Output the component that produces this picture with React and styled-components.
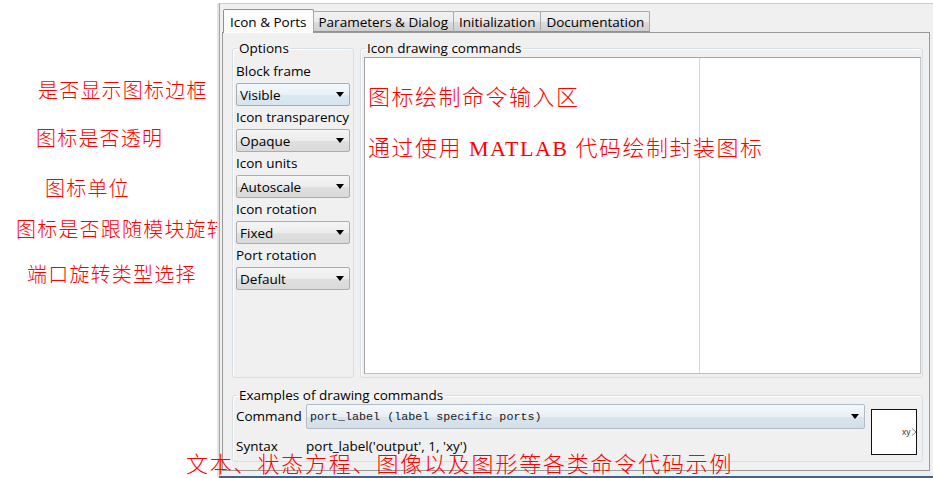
import React from 'react'
import styled, { createGlobalStyle } from 'styled-components'

const uiFont = `"Open Sans", "Noto Sans", sans-serif`
const noteFont = `"Liberation Serif", "Noto Sans CJK SC", serif`

const GlobalStyle = createGlobalStyle`
  html, body {
    margin: 0;
    padding: 0;
    background: #ffffff;
  }

  body {
    overflow: hidden;
  }
`

const Page = styled.div`
  position: relative;
  width: 933px;
  height: 478px;
  display: flex;
  flex-direction: row;
  overflow: hidden;
  font-family: ${uiFont};
`

const Notes = styled.div`
  width: 219px;
  flex: none;
  display: flex;
  flex-direction: column;
`

const Note = styled.div`
  margin-top: ${(p) => p.$top}px;
  padding-left: ${(p) => p.$indent}px;
  font-family: ${noteFont};
  font-size: 20px;
  font-weight: 300;
  line-height: 24px;
  letter-spacing: 1.2px;
  color: #ff0000;
  white-space: nowrap;
`

const Caption = styled.div`
  position: absolute;
  left: 186px;
  top: 453px;
  font-family: ${noteFont};
  font-size: 22px;
  font-weight: 300;
  line-height: 24px;
  letter-spacing: 1.8px;
  color: #ff0000;
  white-space: nowrap;
`

const Window = styled.div`
  flex: 1;
  margin-top: 3px;
  height: 475px;
  box-sizing: border-box;
  display: flex;
  flex-direction: column;
  background: #f0f0f0;
  border-top: 1px solid #cdcdc2;
  border-left: 1px solid #a4a4a4;
  border-bottom: 2px solid #3b648c;
  box-shadow: -2px 0 0 #e4e4e4;
`

const TabBar = styled.div`
  display: flex;
  align-items: flex-end;
  padding: 5px 0 0 3px;
  margin-bottom: -1px;
  position: relative;
  z-index: 1;
`

const Tab = styled.div`
  box-sizing: border-box;
  height: ${(p) => (p.$active ? 24 : 21)}px;
  padding: 0 ${(p) => (p.$active ? 6 : 5)}px;
  margin-left: ${(p) => (p.$active ? 0 : -1)}px;
  display: flex;
  align-items: center;
  font-size: 13.5px;
  color: #000;
  border: 1px solid ${(p) => (p.$active ? '#8e9196' : '#a9a9a9')};
  border-bottom: ${(p) => (p.$active ? 'none' : '1px solid #8e9196')};
  border-radius: 2px 2px 0 0;
  background: ${(p) =>
    p.$active
      ? '#fcfcfc'
      : 'linear-gradient(#f2f2f2, #ebebeb 50%, #dddddd 51%, #cfcfcf)'};
  margin-bottom: ${(p) => (p.$active ? 0 : 1)}px;
`

const Pane = styled.div`
  flex: 1;
  margin: 0 3px 5px 2px;
  box-sizing: border-box;
  display: flex;
  flex-direction: column;
  gap: 8px;
  padding: 6px 6px 8px 9px;
  border: 1px solid #9a9a9a;
  background: #f0f0f0;
`

const TopRow = styled.div`
  flex: 1;
  display: grid;
  grid-template-columns: 122px 1fr;
  column-gap: 6px;
  min-height: 0;
`

const Group = styled.fieldset`
  margin: 0;
  min-width: 0;
  display: flex;
  flex-direction: column;
  padding: ${(p) => p.$pad || '0 3px 3px 3px'};
  border: 1px solid #d5dfe5;
  border-radius: 3px;
  box-shadow: inset 1px 1px 0 #ffffff;
`

const Legend = styled.legend`
  padding: 0 2px;
  margin-left: 1px;
  font-size: 13.5px;
  line-height: 18px;
  color: #000;
`

const OptionList = styled.div`
  display: flex;
  flex-direction: column;
  padding-top: 3px;
`

const Label = styled.div`
  height: 23px;
  line-height: 23px;
  font-size: 13.5px;
  color: #000;
  white-space: nowrap;
`

const Select = styled.div`
  height: ${(p) => (p.$tall ? 25 : 23)}px;
  box-sizing: border-box;
  display: flex;
  align-items: center;
  justify-content: space-between;
  padding: 0 5px 0 3px;
  border: 1px solid ${(p) => (p.$tone === 'blue' ? '#b0bcc7' : '#acacac')};
  border-radius: 2px;
  font-size: 13.5px;
  color: #000;
  background: ${(p) =>
    p.$tone === 'blue'
      ? 'linear-gradient(#f4f8fb, #e8eff5 50%, #dbe5ed 51%, #d3dee7)'
      : p.$tone === 'focus'
        ? 'linear-gradient(#f3f8fc, #e9f2f9 50%, #dce9f3 51%, #d5e4ef)'
        : 'linear-gradient(#f5f5f5, #ececec 50%, #e0e0e0 51%, #d9d9d9)'};
`

const Mono = styled.span`
  font-family: "Liberation Mono", "DejaVu Sans Mono", monospace;
  font-size: 11.7px;
  color: #1a1a1a;
`

const Arrow = styled.span`
  width: 0;
  height: 0;
  border-left: 4px solid transparent;
  border-right: 4px solid transparent;
  border-top: 5px solid #000;
`

const Editor = styled.div`
  flex: 1;
  margin: 0 -2px 0 0;
  box-sizing: border-box;
  display: flex;
  flex-direction: column;
  gap: 21px;
  padding: 25px 0 0 3px;
  border: 1px solid #a3a3a3;
  border-right-color: #c4c4c4;
  border-bottom-color: #bdbdbd;
  background: linear-gradient(
      to right,
      transparent 334px,
      #d7d7d7 334px,
      #d7d7d7 335px,
      transparent 335px
    ),
    #ffffff;
`

const EditorLine = styled.div`
  font-family: ${noteFont};
  font-size: 22px;
  font-weight: 300;
  line-height: 30px;
  letter-spacing: 1.5px;
  color: #ff0000;
  white-space: nowrap;
`

const Examples = styled.div`
  display: grid;
  grid-template-columns: 64px 1fr 46px;
  grid-template-rows: 25px 24px;
  column-gap: 6px;
  row-gap: 5px;
`

const RowLabel = styled.div`
  font-size: 13.5px;
  line-height: ${(p) => p.$line}px;
  color: #000;
`

const SyntaxText = styled.div`
  font-size: 13.5px;
  line-height: 24px;
  color: #000;
`

const Preview = styled.svg`
  grid-column: 3;
  grid-row: 1 / span 2;
  margin-top: 5px;
  overflow: visible;
`

const options = [
  { label: 'Block frame', value: 'Visible', tone: 'focus' },
  { label: 'Icon transparency', value: 'Opaque' },
  { label: 'Icon units', value: 'Autoscale' },
  { label: 'Icon rotation', value: 'Fixed' },
  { label: 'Port rotation', value: 'Default' },
]

const notes = [
  { text: '是否显示图标边框', top: 79, indent: 38 },
  { text: '图标是否透明', top: 24, indent: 36 },
  { text: '图标单位', top: 26, indent: 45 },
  { text: '图标是否跟随模块旋转', top: 17, indent: 16 },
  { text: '端口旋转类型选择', top: 21, indent: 27 },
]

const tabs = ['Icon & Ports', 'Parameters & Dialog', 'Initialization', 'Documentation']

const App = () => {
  return (
    <Page>
      <GlobalStyle />

      <Notes>
        {notes.map((n) => (
          <Note key={n.text} $top={n.top} $indent={n.indent}>
            {n.text}
          </Note>
        ))}
      </Notes>

      <Window>
        <TabBar>
          {tabs.map((t, i) => (
            <Tab key={t} $active={i === 0}>
              {t}
            </Tab>
          ))}
        </TabBar>

        <Pane>
          <TopRow>
            <Group>
              <Legend>Options</Legend>
              <OptionList>
                {options.map((o) => (
                  <React.Fragment key={o.label}>
                    <Label>{o.label}</Label>
                    <Select $tone={o.tone}>
                      {o.value}
                      <Arrow />
                    </Select>
                  </React.Fragment>
                ))}
              </OptionList>
            </Group>

            <Group>
              <Legend>Icon drawing commands</Legend>
              <Editor>
                <EditorLine>图标绘制命令输入区</EditorLine>
                <EditorLine>通过使用 MATLAB 代码绘制封装图标</EditorLine>
              </Editor>
            </Group>
          </TopRow>

          <Group $pad="0 5px 3px 3px">
            <Legend>Examples of drawing commands</Legend>
            <Examples>
              <RowLabel $line={25}>Command</RowLabel>
              <Select $tone="blue" $tall>
                <Mono>port_label (label specific ports)</Mono>
                <Arrow />
              </Select>
              <Preview width="46" height="46" viewBox="0 0 46 46">
                <rect x="0.5" y="0.5" width="45" height="45" fill="#ffffff" stroke="#111" />
                <text x="31" y="26" fontSize="8.5" fontFamily="Liberation Sans, sans-serif" fill="#333">
                  xy
                </text>
                <polyline points="41,19.5 45,23 41,26.5" fill="none" stroke="#666" strokeWidth="0.8" />
              </Preview>
              <RowLabel $line={24}>Syntax</RowLabel>
              <SyntaxText>port_label('output', 1, 'xy')</SyntaxText>
            </Examples>
          </Group>
        </Pane>
      </Window>

      <Caption>文本、状态方程、图像以及图形等各类命令代码示例</Caption>
    </Page>
  )
}

export default App
